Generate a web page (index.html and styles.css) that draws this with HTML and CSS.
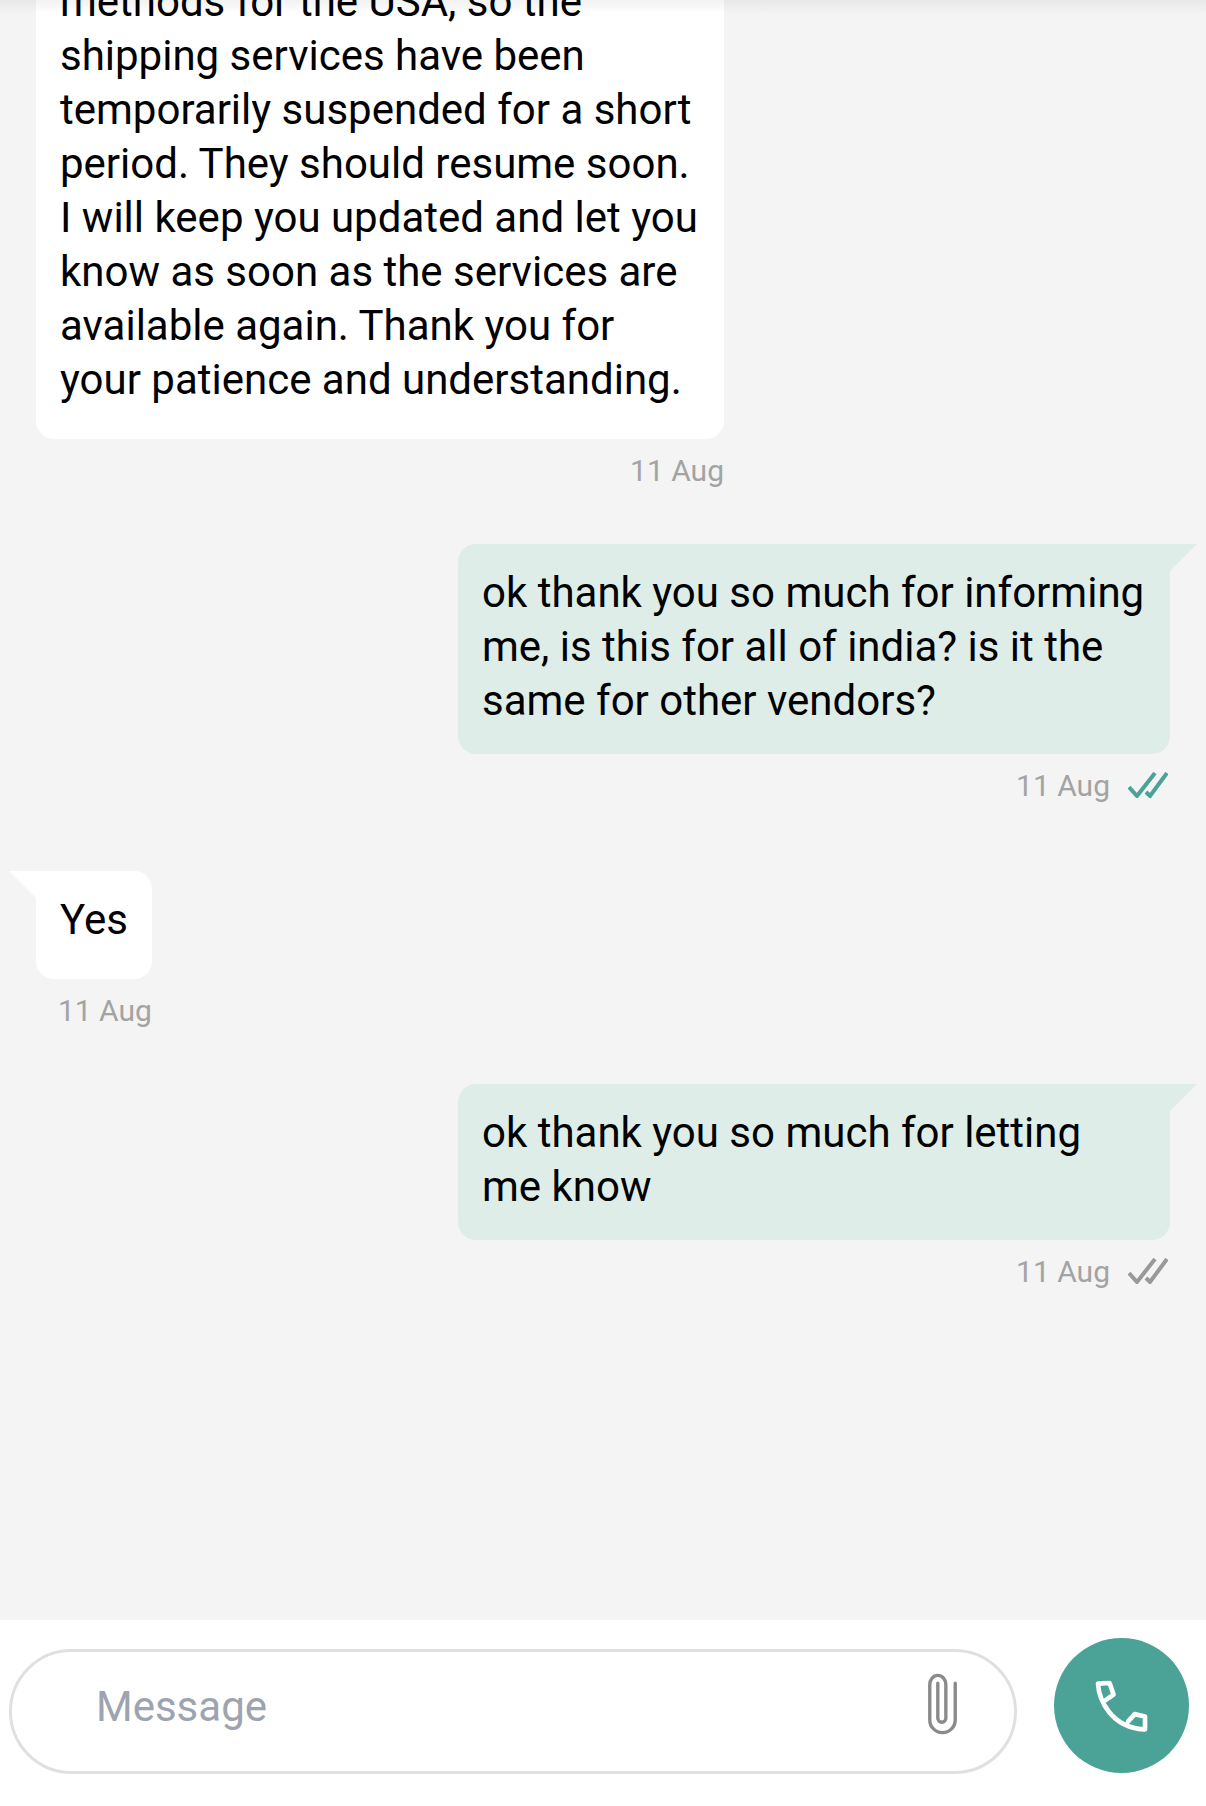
FILE: index.html
```html
<!DOCTYPE html>
<html lang="en">
<head>
    <meta charset="UTF-8">
    <meta name="viewport" content="width=device-width, initial-scale=1.0">
    <title>Messages</title>
    <link rel="stylesheet" href="styles.css">
</head>
<body>
    <main class="thread">
        <div class="msg in">
            <div class="bubble wide-in">methods for the USA, so the shipping services have been temporarily suspended for a short period. They should resume soon. I will keep you updated and let you know as soon as the services are available again. Thank you for your patience and understanding.</div>
            <div class="meta"><span>11 Aug</span></div>
        </div>

        <div class="msg out">
            <div class="bubble wide-out">ok thank you so much for informing me, is this for all of india? is it the same for other vendors?</div>
            <div class="meta">
                <span>11 Aug</span>
                <svg class="ticks read" viewBox="0 0 40 26"><path d="M1 15l8 9L27 1M18 20l4 4L39 1"/></svg>
            </div>
        </div>

        <div class="msg in">
            <div class="bubble">Yes</div>
            <div class="meta"><span>11 Aug</span></div>
        </div>

        <div class="msg out">
            <div class="bubble wide-out">ok thank you so much for letting me know</div>
            <div class="meta">
                <span>11 Aug</span>
                <svg class="ticks" viewBox="0 0 40 26"><path d="M1 15l8 9L27 1M18 20l4 4L39 1"/></svg>
            </div>
        </div>
    </main>

    <footer class="composer">
        <div class="input">
            <span class="placeholder">Message</span>
            <!-- paperclip -->
            <svg class="clip" viewBox="140 275 95 185"><path d="M224 305V415A38 38 0 0 1 148 415V310A24 28 0 0 1 196 310V410A12 12 0 0 1 172 410V305"/></svg>
        </div>
        <button class="call">
            <!-- handset: spine, earpiece, mouthpiece -->
            <svg viewBox="640 290 172 172"><path d="M655 310C658 360 695 442 794 448M655 310L690 308 702 343 679 359M746 424L766 402 797 409 797 448"/></svg>
        </button>
    </footer>
</body>
</html>
```

FILE: styles.css
```css
* {
    box-sizing: border-box;
}

body {
    margin: 0;
    height: 100vh;
    display: flex;
    flex-direction: column;
    overflow: hidden;
    background: #f4f4f4;
    font-family: Roboto, "Liberation Sans", sans-serif;
}

/* the list sticks to the bottom and older messages scroll off the top */
.thread {
    position: relative;
    flex: 1;
    min-height: 0;
    display: flex;
    flex-direction: column;
    justify-content: flex-end;
    padding: 0 36px 331px;
    overflow: hidden;
}

/* soft shadow under the app bar */
.thread::after {
    content: "";
    position: absolute;
    top: 0;
    left: 0;
    right: 0;
    height: 14px;
    background: linear-gradient(rgba(0, 0, 0, 0.05), rgba(0, 0, 0, 0));
}

.msg {
    display: flex;
    flex-direction: column;
    flex-shrink: 0;
    align-items: flex-end;
}

.msg.in {
    align-self: flex-start;
    margin-top: 68px;
}

.msg.out {
    align-self: flex-end;
    margin-top: 56px;
}

.bubble {
    position: relative;
    min-height: 108px;
    padding: 22px 24px 26px;
    font-size: 42px;
    line-height: 54px;
    color: #000;
    border-radius: 18px;
}

.msg.in .bubble {
    background: #fff;
    border-top-left-radius: 0;
}

.msg.out .bubble {
    background: #deede8;
    border-top-right-radius: 0;
}

/* little triangle on the top corner */
.bubble::before {
    content: "";
    position: absolute;
    top: 0;
    width: 27px;
    height: 27px;
}

.msg.in .bubble::before {
    left: -27px;
    background: #fff;
    clip-path: polygon(0 0, 100% 0, 100% 100%);
}

.msg.out .bubble::before {
    right: -27px;
    background: #deede8;
    clip-path: polygon(0 0, 100% 0, 0 100%);
}

.wide-in {
    width: 688px;
    padding-bottom: 32px;
}

.wide-out {
    width: 712px;
}

.meta {
    display: flex;
    align-items: center;
    gap: 18px;
    height: 34px;
    margin-top: 14px;
    margin-bottom: 1px;
    font-size: 30px;
    color: #a3a3a3;
}

.ticks {
    width: 40px;
    height: 26px;
    margin-right: 2px;
}

.ticks path {
    fill: none;
    stroke: #999;
    stroke-width: 4;
}

.ticks.read path {
    stroke: #4ba397;
}

.composer {
    flex: none;
    height: 186px;
    display: flex;
    align-items: flex-start;
    gap: 37px;
    padding: 18px 17px 0 9px;
    background: #fff;
}

.input {
    flex: 1;
    height: 125px;
    margin-top: 11px;
    display: flex;
    align-items: center;
    justify-content: space-between;
    padding: 0 55px 0 84px;
    border: 3px solid #e0e0e0;
    border-radius: 63px;
}

.placeholder {
    margin-top: -11px;
    font-size: 42px;
    color: #9ea3b0;
}

.clip {
    width: 32px;
    height: 62px;
    margin-top: -16px;
}

.clip path {
    fill: none;
    stroke: #8a8a8a;
    stroke-width: 10;
    stroke-linecap: round;
}

.call {
    flex: none;
    width: 135px;
    height: 135px;
    padding: 0;
    border: none;
    border-radius: 50%;
    background: #4ba397;
    display: flex;
    align-items: center;
    justify-content: center;
}

.call svg {
    width: 57px;
    height: 57px;
}

.call path {
    fill: none;
    stroke: #fff;
    stroke-width: 14;
    stroke-linejoin: round;
    stroke-linecap: round;
}
```
